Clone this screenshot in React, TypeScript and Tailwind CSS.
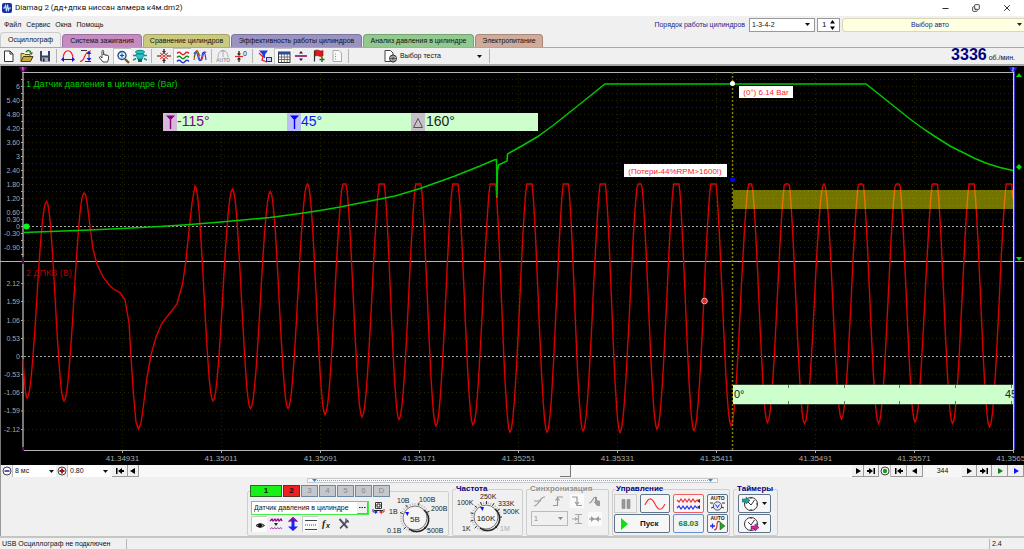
import React from "react";
import { Minus, X, Copy } from "lucide-react";

type Kids = { children?: React.ReactNode };

function Ico({ w = 14, h = 14, children }: Kids & { w?: number; h?: number }) {
  return (
    <svg width={w} height={h} viewBox={`0 0 ${w} ${h}`} fill="none" className="shrink-0" aria-hidden="true">
      {children}
    </svg>
  );
}

/* ---------- title and menu ---------- */

function TitleBar() {
  return (
    <header className="flex h-4 items-center bg-white pl-0.5">
      <Ico w={10} h={10}>
        <rect width="10" height="10" rx="2" fill="#1a2fa0" />
        <path d="M1 5h1.500l1-2.500 1 6 1-7 1 5.500.8-2H9" stroke="#bfe0ff" strokeWidth="1.1" />
      </Ico>
      <h1 className="ml-[3px] flex-1 font-[Roboto,'Noto_Sans',sans-serif] text-[8px] leading-4 text-[#111]">
        Diamag 2 (дд+дпкв ниссан алмера к4м.dm2)
      </h1>
      <div className="flex items-center gap-[22px] pr-3 text-[#222]">
        <button aria-label="Свернуть"><Minus size={9} strokeWidth={2.5} /></button>
        <button aria-label="Восстановить"><Copy size={8} strokeWidth={2.5} className="-scale-x-100 rotate-180" /></button>
        <button aria-label="Закрыть"><X size={10} strokeWidth={2.2} /></button>
      </div>
    </header>
  );
}

function Select({ label, value, options, className, arrowPad = "right-1" }: { label: string; value: string; options: string[]; className: string; arrowPad?: string }) {
  return (
    <span className={`relative flex items-center ${className}`}>
      <select aria-label={label} defaultValue={value} className="h-full w-full appearance-none bg-transparent pl-0.5 text-[7px] leading-[10px] outline-none">
        {options.map((o) => <option key={o}>{o}</option>)}
      </select>
      <span className={`pointer-events-none absolute ${arrowPad}`}><Arrow /></span>
    </span>
  );
}

function Arrow() {
  return <Ico w={5} h={3}><path d="M0 0h5L2.500 3z" fill="currentColor" /></Ico>;
}

function MenuBar() {
  return (
    <div className="flex h-[17px] items-center bg-[#f0f0f0]">
      <nav className="flex flex-1 gap-[5px] pl-1">
        {["Файл", "Сервис", "Окна", "Помощь"].map((m) => <button key={m}>{m}</button>)}
      </nav>
      <span className="mr-1 text-[#1c1c8c]">Порядок работы цилиндров</span>
      <Select label="Порядок работы цилиндров" value="1-3-4-2" options={["1-3-4-2", "1-2-4-3"]} className="mr-0.5 h-3.5 w-[66px] border border-[#999] bg-white" />
      <span className="relative mr-0.5 flex h-3.5 w-[23px] items-center border border-[#999] bg-white">
        <input aria-label="Номер цилиндра" defaultValue="1" className="w-full bg-transparent pl-1 text-[8px] outline-none" />
        <span className="pointer-events-none absolute right-1">
          <Ico w={5} h={10}><path d="M0 3.500h5L2.500 0zM0 6.500h5L2.500 10z" fill="#000" /></Ico>
        </span>
      </span>
      <button className="flex h-3.5 w-[182px] items-center rounded-l-sm border border-r-0 border-[#d8d8b8] bg-[#ffffe1] pr-0.5 text-[#1c1c8c]">
        <span className="flex-1">Выбор авто</span>
        <span className="text-[#222]"><Arrow /></span>
      </button>
    </div>
  );
}

function Tabs() {
  const tabs = [
    ["Осциллограф", "w-[61px] bg-[#f0f0f0] border-[#ccc] h-[15px]"],
    ["Система зажигания", "w-[80px] bg-[#c48cc2] border-[#a070a0] h-[13px]"],
    ["Сравнение цилиндров", "w-[87px] bg-[#c9c97f] border-[#a5a568] h-[13px]"],
    ["Эффективность работы цилиндров", "w-[131px] bg-[#9a93c2] border-[#7c76a0] h-[13px]"],
    ["Анализ давления в цилиндре", "w-[111px] bg-[#93c98f] border-[#76a472] h-[13px]"],
    ["Электропитание", "w-[68px] bg-[#d0aa9a] border-[#a88878] h-[13px]"],
  ];
  return (
    <div role="tablist" className="flex h-3.5 items-end gap-px bg-[#f0f0f0]">
      {tabs.map(([t, c], i) => (
        <button role="tab" aria-selected={i === 0} key={t} className={`shrink-0 rounded-t-sm border border-b-0 whitespace-nowrap ${c}`}>
          {t}
        </button>
      ))}
    </div>
  );
}

/* ---------- toolbar ---------- */

function Tool({ label, on, children }: Kids & { label: string; on?: boolean }) {
  return (
    <button
      aria-label={label}
      aria-pressed={on}
      className={`flex h-4 w-[18px] shrink-0 items-center justify-center ${on ? "border-t border-l border-[#c4c4c4] bg-[#fafafa]" : ""}`}
    >
      <Ico>{children}</Ico>
    </button>
  );
}

function Sep() {
  return <span className="mx-0.5 h-3.5 w-px shrink-0 bg-[#b4b4b4]" />;
}

function Toolbar() {
  return (
    <div role="toolbar" className="flex h-[19px] items-center border-t border-b-2 border-[#a8a8a8] bg-[#f0f0f0]">
      <Tool label="Новый"><path d="M2.500 2h5.500l3 3v7.500H2.500zM8 2v3h3" fill="#fff" stroke="#333" /></Tool>
      <Tool label="Открыть">
        <path d="M1 12.500V4.500h3l1 1h5v2" fill="#e8d070" stroke="#66581a" />
        <path d="M1 12.500l2.500-5H13l-2.500 5z" fill="#c9a93a" stroke="#4a3f10" />
        <path d="M6 3c2-2.500 4-1.500 5 .5" stroke="#137a13" strokeWidth="1.400" /><path d="M9 3.500h4L11.500 6z" fill="#137a13" />
      </Tool>
      <Tool label="Сохранить">
        <path d="M2 2h10v10.500H3l-1-1z" fill="#37445c" /><rect x="4" y="2" width="6" height="4.500" fill="#f4f6fa" /><rect x="4" y="8.500" width="6" height="4" fill="#aab4c4" /><rect x="5" y="9.500" width="1.500" height="3" fill="#222" />
      </Tool>
      <Sep />
      <Tool label="Масштаб по горизонтали">
        <path d="M2 10C2 -1 12 -1 12 10" stroke="#f02020" strokeWidth="1.200" /><path d="M2 10.500h10" stroke="#1818e0" /><path d="M0 10.500l3-2.500v5zM14 10.500l-3-2.500v5z" fill="#1818e0" />
      </Tool>
      <Tool label="Масштаб по вертикали">
        <path d="M1 12.500c6 0 3-10.500 11-10.500" stroke="#f02020" strokeWidth="1.200" /><path d="M2 1.500h6M6 12.500h6M10 3v8" stroke="#333" /><path d="M10 2L7.500 5h5zM10 12L7.500 9h5z" fill="#1818e0" />
      </Tool>
      <Tool label="Рука">
        <path d="M5 8V2.300c0-1.300 1.600-1.300 1.600 0V6c0-1 1.700-1 1.700 0v.5c0-1 1.600-1 1.600 0V7c0-1 1.600-.8 1.600.2V10l-1 3H6L2.500 8.800C2 7.600 3.500 7.200 4 8l1 1z" fill="#fff" stroke="#333" strokeWidth=".9" />
      </Tool>
      <Tool label="Лупа" on>
        <path d="M9 9l4 4" stroke="#7a5a20" strokeWidth="2.400" /><circle cx="6" cy="5.500" r="4" fill="#d8ecff" stroke="#22508c" strokeWidth="1.400" /><path d="M4 5.500h4M6 3.500v4" stroke="#22508c" strokeWidth="1.200" />
      </Tool>
      <Tool label="Датчик">
        <ellipse cx="7" cy="3" rx="4.500" ry="1.700" fill="#2ac4c4" stroke="#128888" /><path d="M3 5c0 2 1.500 3 1.500 5h5c0-2 1.500-3 1.500-5z" fill="#2ac4c4" stroke="#128888" /><path d="M0 6.500h3M11 6.500h3M0 11l3-1.500M14 11l-3-1.500" stroke="#158a8a" strokeWidth="1.400" /><rect x="5" y="10" width="4" height="3" fill="#136a6a" />
      </Tool>
      <Sep /><span className="w-px" />
      <Tool label="Сжать">
        <path d="M0 7h3l4-3 4 3h3" stroke="#159015" /><path d="M0 7h3l4 3 4-3h3M3 4l8 6M3 10l8-6" stroke="#e02828" strokeWidth=".9" /><path d="M7 0v2.500M7 11.500V14" stroke="#333" strokeWidth="1.400" /><path d="M5 2h4L7 4.500zM5 12h4L7 9.500z" fill="#333" />
      </Tool>
      <Tool label="Раздельно" on>
        <path d="M1 3.500q2-2.500 4 0t4 0 4 0" stroke="#e02828" strokeWidth="1.300" /><path d="M1 7.500q2-2.500 4 0t4 0 4 0" stroke="#159015" strokeWidth="1.300" /><path d="M1 11.500q2-2.500 4 0t4 0 4 0" stroke="#2038e0" strokeWidth="1.300" />
      </Tool>
      <Tool label="Совместно">
        <path d="M1 11C3-2 5 0 6 7s3 5 4 0 2-5 3-3" stroke="#e02828" strokeWidth="1.100" /><path d="M1 5c2-4 3-2 4 3s3 5 4-1 3-5 4 4" stroke="#2038e0" strokeWidth="1.100" /><path d="M1 8c2-8 4-6 6-1" stroke="#159015" />
      </Tool>
      <Sep />
      <Tool label="Автоизмерение">
        <path d="M2 8.500C2-1 12-1 12 8.500M7 1v7M5.500 3L7 1l1.500 2" stroke="#aaa" /><text x="7" y="13" textAnchor="middle" fontSize="5" fontWeight="700" fill="#999">AUTO</text>
      </Tool>
      <Tool label="Ноль">
        <path d="M1 7.500h8" stroke="#e02828" strokeWidth="1.200" /><path d="M5 2v3M5 10v3" stroke="#222" strokeWidth="1.300" /><path d="M3 4.500h4L5 7zM3 10.500h4L5 8z" fill="#222" /><text x="9" y="7" fontSize="7" fill="#222">0</text>
      </Tool>
      <Sep /><span className="w-px" />
      <Tool label="Фильтр">
        <path d="M1 1.500h9L7 5.500v4L4.500 7.500v-2z" fill="#2038e0" /><path d="M1 4l4 4-1 3 5 2" stroke="#e02828" strokeWidth="1.300" /><rect x="8.500" y="8.500" width="5" height="4" fill="#c8d4ff" stroke="#2a2a88" />
      </Tool>
      <Tool label="Таблица" on>
        <rect x="1.500" y="2" width="11.500" height="10.500" fill="#fff" stroke="#333" /><rect x="1.500" y="2" width="11.500" height="2.500" fill="#2c4c9c" /><path d="M4.500 4v8M7.300 4v8M10.200 4v8M2 7h11M2 9.500h11" stroke="#555" strokeWidth=".8" />
      </Tool>
      <Tool label="Разделитель"><path d="M1 7h12" stroke="#800060" strokeWidth="1.500" /><path d="M5 4.500h4L7 2zM5 9.500h4L7 12z" fill="#222" /></Tool>
      <Tool label="Флаг"><path d="M2.500 1.500v11" stroke="#333" strokeWidth="1.200" /><path d="M3 1.500q2-1 4 0t4 0V7Q9 8 7 7T3 7z" fill="#e01818" stroke="#801010" strokeWidth=".6" /><path d="M7.500 10.500h5M10 8v5" stroke="#118011" strokeWidth="1.500" /></Tool>
      <Tool label="Отчёт"><path d="M3 1.500h6l2.500 2.500v8.500H3z" fill="#fafafa" stroke="#aaa" /><path d="M5 5h1M5 7.500h1M5 10h1" stroke="#888" /></Tool>
      <Sep />
      <button className="flex h-4 w-[136px] shrink-0 items-center pr-[5px] pl-[33px]">
        <Ico w={14} h={14}>
          <path d="M1 1.500h5.500L9 4v8.500H1z" fill="#fff" stroke="#444" /><circle cx="9" cy="9.500" r="3.500" fill="#ddd" stroke="#333" /><path d="M5 9.500h8M9 5.500v8M6.500 7l5 5M11.500 7l-5 5" stroke="#444" strokeWidth=".8" />
        </Ico>
        <span className="ml-0.5 flex-1 text-left">Выбор теста</span>
        <Arrow />
      </button>
      <Sep />
      <p className="ml-auto flex items-baseline gap-0.5 pr-[9px] leading-4">
        <strong className="text-base leading-4 text-[#00007c]">3336</strong>
        <span>об./мин.</span>
      </p>
    </div>
  );
}

/* ---------- chart ---------- */

const EXTREMES: [number, number][] = [
  [195, 186], [213, 401], [232.5, 189], [250.5, 408.5], [270.3, 191.5], [288, 408.5], [307.500, 183.500], [325, 414.5],
  [344.5, 178], [362, 417], [382, 170], [399, 419.5], [418.5, 168], [436, 426], [455.5, 168], [473, 425], [493, 168],
  [510, 432], [529.5, 168], [547, 432], [566, 168], [583, 431], [603, 168], [620, 432.5], [639.7, 175], [657, 429],
  [676.5, 168], [694, 430.5], [713.5, 170], [731, 425.5], [750.3, 178], [767.5, 422.5], [787, 173], [804.5, 423.5],
  [824, 183.5], [841.5, 419], [861, 173], [878.5, 423.5], [897.7, 174], [915, 422], [935, 172], [952.500, 423.5],
  [971.7, 170], [989.5, 427], [1009, 170], [1027, 427],
];
const START: [number, number][] = [[19, 320], [27, 398], [46.5, 201.5], [64, 401], [84, 193]];
const GAP: [number, number][] = [
  [84, 193], [85.5, 194.5], [87, 202], [88.5, 214], [90, 227], [93, 249], [97, 264], [103, 277], [110, 286], [115, 290], [120, 292.5], [125, 300],
  [129, 323], [131, 357], [133.3, 393], [136, 422], [138.5, 429], [141, 423], [143.5, 405], [147, 377], [151, 355],
  [156, 337], [162, 323], [170, 313], [177, 304], [180, 293], [182.7, 283], [186, 260], [189, 230], [192, 203],
];

function swing(pts: [number, number][]) {
  const out: string[] = [];
  for (let i = 0; i < pts.length - 1; i++) {
    const [x0, y0] = pts[i];
    const [x1, y1] = pts[i + 1];
    for (let k = 0; k < 14; k++) {
      const t = k / 14;
      const x = x0 + (x1 - x0) * t;
      const y = Math.max(184, y0 + ((y1 - y0) * (1 - Math.cos(Math.PI * t))) / 2);
      if (x >= 23 && x <= 1013) out.push(`${x.toFixed(1)},${y.toFixed(1)}`);
    }
  }
  return out;
}

const RED = [...swing(START), ...GAP.map((p) => p.join(",")), ...swing(EXTREMES)].join(" ");
const GREEN =
  "23,232.5 50,231.5 90,230 122,228.5 160,226.5 190,224.500 221,222 270,217.500 300,213.5 320,210.500 340,207 360,203 380,199 395,196 420,188.5 455,176 480,166 494,160 496.5,159.500 497,198 497.5,170 498.5,165 507,161 507.500,154 520,147 537,137 553,125.5 575,108 590,96 605,84 866,84 880,95 893,105.500 910,119 925,130 935,136.5 950,146 963,152.500 975,158.500 987,163.500 1000,167.500 1013,170.5";

const X_TICKS: [number, string][] = [
  [122.5, "41.34931"], [221, "41.35011"], [320.5, "41.35091"], [419, "41.35171"], [518.5, "41.35251"],
  [617.5, "41.35331"], [716.5, "41.35411"], [815.5, "41.35491"], [914, "41.35571"], [1013, "41.35651"],
];
const Y_TOP: [number, string][] = [
  [86.5, "6"], [100.5, "5.40"], [114.5, "4.80"], [128.5, "4.20"], [142.5, "3.60"], [156.5, "3"], [170.5, "2.40"],
  [184.5, "1.80"], [198.5, "1.20"], [212.5, "0.60"], [219.5, "0.30"], [226.5, "0"], [233.5, "-0.30"], [247.5, "-0.90"],
];
const Y_BOTTOM: [number, string][] = [
  [283, "2.12"], [301, "1.59"], [320, "1.06"], [338, "0.53"], [356, "0"], [374, "-0.53"], [392, "-1.06"], [410.5, "-1.59"], [429, "-2.12"],
];
const MINOR = Array.from({ length: 26 }, (_, i) => 79.5 + i * 7);

function Chart() {
  return (
    <svg viewBox="0 66 1024 399" className="block w-full bg-black" role="img" aria-label="Осциллограмма">
      <clipPath id="plot"><rect x="22" y="66" width="992" height="399" /></clipPath>
      <g stroke="#262600" strokeDasharray="1 3">
        {MINOR.map((y) => <path key={y} d={`M24 ${y}H1013`} />)}
        {Y_BOTTOM.map(([y]) => <path key={y} d={`M24 ${y + 0.5}H1013`} />)}
        {X_TICKS.slice(0, 9).map(([x]) => <path key={x} d={`M${Math.floor(x) + 0.5} 74V450`} />)}
      </g>
      <g stroke="#a8a8a8" strokeDasharray="2 2"><path d="M24 226.500H1013M24 356.500H1013" /></g>
      <path d="M0.500 66V465" stroke="#777" />
      <path d="M23 72V450" stroke="#777" strokeWidth="2" />
      <g stroke="#aaa">
        {MINOR.map((y) => <path key={y} d={`M21 ${y}h2`} />)}
        {Y_BOTTOM.map(([y]) => <path key={y} d={`M21 ${y + 0.5}h2`} />)}
        {X_TICKS.map(([x]) => <path key={x} d={`M${Math.floor(x) + 0.5} 451v2`} />)}
      </g>
      <path d="M22 72.500H1014M0 261.500H1024M22 450.500H1014" stroke="#b4b4b4" />
      <path d="M23 257v7M23 447v4" stroke="#501050" strokeWidth="2" />
      <g fill="#a8a8a8" fontSize="7" textAnchor="end">
        {[...Y_TOP, ...Y_BOTTOM].map(([y, t]) => <text key={y} x="20" y={y + 2.5}>{t}</text>)}
      </g>
      <g fill="#a8a8a8" fontSize="8" textAnchor="middle">
        {X_TICKS.map(([x, t]) => <text key={x} x={x} y="461">{t}</text>)}
      </g>
      <g clipPath="url(#plot)">
        <polyline points={RED} fill="none" stroke="#d80000" strokeWidth="1.400" />
        <polyline points={GREEN} fill="none" stroke="#00c800" strokeWidth="1.500" />
      </g>
      <rect x="733" y="190" width="281" height="19" fill="#ffff00" fillOpacity=".45" />
      <path d="M732.500 72V450" stroke="#808000" strokeDasharray="2 2" strokeWidth="1.500" />
      <path d="M1014 68V450" stroke="#3a3ad0" strokeWidth="2" /><path d="M1013.500 72V450" stroke="#c8c8f0" />
      <g fontSize="9">
        <text x="26" y="87" fill="#00c800">1 Датчик давления в цилиндре (Bar)</text>
        <text x="26" y="276" fill="#b00000">2 ДПКВ (B)</text>
      </g>
      <path d="M18.500 67h9l-3 4v1h-3v-1z" fill="#800080" /><path d="M22 68l1 -0.500v3" stroke="#e8c8e8" strokeWidth=".8" fill="none" />
      <path d="M1008.500 67h9l-3 5h-3z" fill="#1818e8" /><path d="M1012 68h2l-2 3h2" stroke="#d8d8ff" strokeWidth=".7" fill="none" />
      <path d="M1016 77l3-4 3 4zM1016 257h6l-3 4z" fill="#00e000" />
      <path d="M1019 164l3 3-3 3-3-3z" fill="#00e000" />
      <circle cx="26.500" cy="226.500" r="3" fill="#00ff20" />
      <circle cx="732.500" cy="83.500" r="2.500" fill="#fff" />
      <circle cx="732.500" cy="179.500" r="2.500" fill="#0000f0" />
      <circle cx="704.500" cy="301" r="2.800" fill="#f02020" stroke="#eec8c8" strokeWidth=".9" />

      <rect x="163" y="113" width="375" height="18" fill="#ccffcc" />
      <rect x="163" y="113" width="14" height="18" fill="#d8b8d8" />
      <rect x="287" y="113" width="14" height="18" fill="#bcbcf8" />
      <rect x="411" y="113" width="14" height="18" fill="#c8c0c8" />
      <path d="M166 115.500h9l-3.800 4V129h-1.400v-9.500z" fill="#800080" />
      <path d="M290 115.500h9l-3.800 4V129h-1.400v-9.500z" fill="#0000ff" />
      <path d="M413.500 127.500h9L418 118.500z" fill="none" stroke="#555" />
      <g fontSize="14">
        <text x="177" y="126" fill="#800080">-115°</text>
        <text x="301" y="126" fill="#1414ff">45°</text>
        <text x="426" y="126" fill="#222">160°</text>
      </g>
      <rect x="739" y="86" width="54" height="12" fill="#fff" />
      <rect x="624" y="164" width="103" height="13" fill="#fff" />
      <g fontSize="8" fill="#ff2020" textAnchor="middle">
        <text x="766" y="95">(0°) 6.14 Bar</text>
        <text x="675" y="174">(Потери-44%RPM&gt;1600!)</text>
      </g>
      <rect x="733" y="385" width="280" height="19" fill="#ccffcc" />
      <path d="M733 384.500h280M733 404.500h280" stroke="#446644" strokeWidth=".6" />
      <path d="M788.500 385v3M844.500 385v3M899.500 385v3M955.500 385v3M1011.500 385v3M788.500 401v3M844.500 401v3M899.500 401v3M955.500 401v3M1011.500 401v3" stroke="#667766" />
      <g fontSize="11" fill="#222" clipPath="url(#plot)">
        <text x="734" y="398">0°</text>
        <text x="1005" y="398">45°</text>
      </g>
    </svg>
  );
}

/* ---------- scroll strip ---------- */

const SHAPES: Record<string, string> = {
  toStart: "M1 1h1.500v6H1zM3 4l4-3v2h2v2H7v2z",
  toEnd: "M9 1H7.500v6H9zM7 4L3 1v2H1v2h2v2z",
  left: "M2 4l5-3v6z",
  right: "M8 4L3 1v6z",
};

function Nav({ shape, label, w = "w-[15px]", color = "text-black" }: { shape: string; label: string; w?: string; color?: string }) {
  return (
    <button aria-label={label} className={`flex h-3 shrink-0 items-center justify-center border-r border-b border-[#9a9a9a] bg-[#f0f0f0] ${w} ${color}`}>
      <Ico w={10} h={8}><path d={SHAPES[shape]} fill="currentColor" /></Ico>
    </button>
  );
}

function Round({ label, children }: Kids & { label: string }) {
  return (
    <button aria-label={label} className="flex h-3 w-3 shrink-0 items-center justify-center border-r border-[#bbb] bg-[#eee]">
      <Ico w={10} h={10}><circle cx="5" cy="5" r="4" stroke="#444" fill="#fff" />{children}</Ico>
    </button>
  );
}

function ScrollStrip() {
  return (
    <div className="flex h-3 items-center border-l border-[#999] bg-[#f6f6f6]">
      <Round label="Уменьшить"><path d="M2.500 5h5" stroke="#2020b0" strokeWidth="1.500" /></Round>
      <Select label="Длительность" value="8 мс" options={["8 мс", "16 мс"]} className="h-3 w-[43px] bg-white" arrowPad="right-0.5" />
      <Round label="Увеличить"><path d="M2.500 5h5M5 2.500v5" stroke="#a01010" strokeWidth="1.800" /></Round>
      <Select label="Масштаб" value="0.80" options={["0.80", "1.00"]} className="h-3 w-[42px] bg-white" arrowPad="right-0.5" />
      <span className="w-0.5" />
      <Nav shape="toStart" label="В начало" w="w-4" />
      <Nav shape="left" label="Назад" w="w-[11px]" />
      <div className="flex h-3 flex-1 bg-[#f8f8f8]">
        <span className="grow-3" />
        <span className="h-3 w-[11px] border-r border-b border-[#777] bg-[#f0f0f0]" />
        <span className="grow-2" />
      </div>
      <Nav shape="right" label="Вперёд" w="w-3" />
      <Nav shape="toEnd" label="В конец" />
      <Round label="Запись"><circle cx="5" cy="5" r="2.200" fill="#18a018" /></Round>
      <Nav shape="toStart" label="Первый кадр" w="w-4" />
      <Nav shape="left" label="Предыдущий кадр" w="w-4" />
      <output className="w-[39px] text-center">344</output>
      <Nav shape="right" label="Следующий кадр" />
      <Nav shape="toEnd" label="Последний кадр" />
      <Nav shape="right" label="Воспроизвести" color="text-[#108010]" w="w-4" />
      <Nav shape="right" label="Воспроизвести всё" color="text-[#1010ff]" w="w-4" />
    </div>
  );
}

/* ---------- control panel ---------- */

type Mark = [number, number, string, string?];

function Knob({ w, cx, cy, value, marks, angles, pointer }: { w: number; cx: number; cy: number; value: string; marks: Mark[]; angles: number[]; pointer: [number, number] }) {
  const at = (a: number, r: number) => `${(cx + r * Math.cos((a * Math.PI) / 180)).toFixed(1)} ${(cy - r * Math.sin((a * Math.PI) / 180)).toFixed(1)}`;
  return (
    <svg width={w} height="38" viewBox={`0 0 ${w} 38`} className="shrink-0" role="slider" aria-valuenow={0} aria-valuetext={value} tabIndex={0}>
      <circle cx={cx} cy={cy} r="14" fill="none" stroke="#b8b8b8" strokeWidth="2" strokeDasharray="1 1.500" />
      {angles.map((a) => <path key={a} d={`M${at(a, 13)}L${at(a, 16)}`} stroke="#333" />)}
      <circle cx={cx} cy={cy} r="12" fill="#f4f4f4" stroke="#777" />
      <path d={`M${cx + 9} ${cy - 8}a12 12 0 0 1 -15 19`} fill="none" stroke="#222" strokeWidth="1.500" />
      <path d={`M${pointer[0] - 2} ${pointer[1] - 2}h4l-1.500 4z`} fill="#1010ff" />
      <text x={cx} y={cy + 4} fontSize="8" textAnchor="middle" fill="#222">{value}</text>
      <g fontSize="7" fill="#222">
        {marks.map(([x, y, t, c]) => <text key={t} x={x} y={y} fill={c}>{t}</text>)}
      </g>
    </svg>
  );
}

function Group({ title, className, muted, children }: Kids & { title: string; className: string; muted?: boolean }) {
  return (
    <fieldset className={`h-[52px] shrink-0 rounded-xs border border-[#cfcfcf] ${className}`}>
      <legend className={`ml-[3px] h-2.5 text-[8px] leading-[10px] font-bold ${muted ? "text-[#909090]" : "text-[#00007c]"}`}>{title}</legend>
      {children}
    </fieldset>
  );
}

function Small({ label, on, children }: Kids & { label: string; on?: boolean }) {
  return (
    <button aria-label={label} className={`flex h-4 w-4 items-center justify-center ${on ? "border-t border-l border-[#c8c8c8] bg-[#fafafa]" : ""}`}>
      <Ico>{children}</Ico>
    </button>
  );
}

const RAISED = "flex items-center justify-center rounded-xs border border-[#5f7488] bg-[#f6f6f6]";

function Panel() {
  return (
    <section className="flex h-[53px] items-end justify-center gap-[3px] border-l border-[#999] bg-[#f0f0f0] text-[8px]">
      <fieldset className="h-[51px] w-[202px] shrink-0 rounded-xs border border-[#cfcfcf]">
        <legend className="ml-0.5">
          <div className="flex h-3 gap-px">
            <button className="w-8 border border-[#2a6a2a] bg-[#18f018] leading-[10px] font-bold">1</button>
            <button className="w-[17px] border border-[#603030] bg-[#f02020] leading-[10px] font-bold">2</button>
            {["3", "4", "5", "6", "D"].map((c) => (
              <button key={c} className="w-[17px] border border-[#6a8aa8] bg-[#c4c8cc] leading-[10px] text-[#8a8a8a]">{c}</button>
            ))}
          </div>
        </legend>
        <div className="flex pl-[3px]">
          <div className="mt-1 w-[134px]">
            <div className="flex items-center gap-[3px]">
              <span className="flex h-3.5 w-[119px] items-center border border-[#44ee44] bg-white">
                <input aria-label="Датчик" defaultValue="Датчик давления в цилиндре" className="min-w-0 flex-1 bg-transparent pl-0.5 text-[7px] outline-none" />
                <button aria-label="Выбрать датчик" className="flex h-full w-[11px] items-center justify-center border-r border-b border-[#999] bg-[#f0f0f0]">
                  <Ico w={7} h={2}><path d="M0 .5h1.500M2.500.5H4M5 .5h1.500" stroke="#222" /></Ico>
                </button>
              </span>
              <Ico w={13} h={14}>
                <path d="M3.500 1.500h6v6h-6z" fill="#fff" stroke="#333" /><path d="M5 3h3v3H5zM2 9.500h9" stroke="#222" />
                <path d="M1 8v3h3" stroke="#2020e0" /><path d="M3 9l3 2-3 2z" fill="#2020e0" /><path d="M12 8v3H9" stroke="#e02020" /><path d="M10 9l-3 2 3 2z" fill="#e02020" />
              </Ico>
            </div>
            <div className="mt-px flex gap-px">
              <Small label="Показать" on>
                <path d="M3 7.500Q7 4 11.500 7.500 7 11 3 7.500z" fill="#999" stroke="#222" /><circle cx="7" cy="7.500" r="2" fill="#111" />
              </Small>
              <Small label="Сигнал">
                <path d="M1 4l2-2 1 2 2-2 1 2 2-2 1 2 2-2 1 2" stroke="#900090" strokeWidth="1.300" /><path d="M1 12l2-1.500 1 1.500 2-1.500 1 1.500 2-1.500 1 1.500 2-1.500 1 1.500" stroke="#b040b0" /><path d="M5 6h4L7 9z" fill="#222" />
              </Small>
              <Small label="Смещение">
                <path d="M7 0l5 4.500H8.500v5H12L7 14 2 9.500h3.500v-5H2z" fill="#2020f0" /><path d="M2 4.500L7 0v2L4 4.500zM12 4.500L7 0v2l3 2.500z" fill="#a01080" />
              </Small>
              <Small label="Линии" on><path d="M1 2.500h12M1 11.500h12" stroke="#444" /><path d="M1 7h12" stroke="#444" strokeDasharray="1 1" /></Small>
              <Small label="Функция"><text x="2" y="10" fontSize="10" fontStyle="italic" fontWeight="700" fontFamily="Liberation Serif, serif" fill="#222">f</text><text x="6" y="11" fontSize="7" fontStyle="italic" fontWeight="700" fill="#222">x</text></Small>
              <Small label="Настройки"><path d="M2.500 2l8 9" stroke="#555" strokeWidth="2" /><path d="M11 3L3 11.500" stroke="#446" strokeWidth="1.600" /><path d="M9 1.500v3l3 .5" stroke="#557" strokeWidth="1.400" /></Small>
            </div>
          </div>
          <Knob
            w={63} cx={30} cy={21} value="5В" pointer={[22, 17]} angles={[225, 160, 125, 75, 25, -45]}
            marks={[[2, 36, "0.1В"], [4, 17, "1В"], [12, 6, "10В"], [34, 5, "100В"], [46, 14, "200В"], [42, 36, "500В"]]}
          />
        </div>
      </fieldset>

      <Group title="Частота" className="w-[71px]">
        <Knob
          w={69} cx={33} cy={23} value="160K" pointer={[29, 15]} angles={[225, 195, 165, 135, 110, 88, 60, 30, 0, -45]}
          marks={[[9, 37, "1K"], [4, 11, "100K"], [27, 5, "250K"], [45, 12, "333K"], [50, 20, "500K"], [47, 37, "1M", "#aaa"]]}
        />
      </Group>

      <Group title="Синхронизация" muted className="w-[83px]">
        <div className="grid grid-cols-4 place-items-center gap-y-[3px] px-1 text-[#aaa]">
          <button aria-label="Источник"><Ico><path d="M1 12c5 0 5-9 11-9M1 7h7" stroke="#999" strokeWidth="1.200" /></Ico></button>
          <button aria-label="Фронт"><Ico><path d="M2 11.500h4.500V3H12M4.500 6.500l2-2.500 2 2.500" stroke="#999" strokeWidth="1.200" /></Ico></button>
          <button aria-label="Спад" className="bg-[#fafafa]"><Ico><path d="M2 3h5v8.500h5M5 8l2 2.500 2-2.500" stroke="#999" strokeWidth="1.200" /></Ico></button>
          <button aria-label="Рука"><Ico><path d="M1 9c4 0 3-6 7-6" stroke="#999" strokeWidth="1.200" /><path d="M7 3v5L5 7l4 5h3V7L9 6V3z" fill="#999" /></Ico></button>
          <Select label="Канал синхронизации" value="1" options={["1", "2"]} className="col-span-2 h-[15px] w-full border border-[#bbb] text-[#888]" />
          <button aria-label="Уровень"><Ico><path d="M5 2.500h7M2 7h6M5 11.500h7M8.500 3v8" stroke="#aaa" strokeWidth="1.200" /><path d="M5 5l3 2-3 2z" fill="#aaa" /></Ico></button>
          <button aria-label="Сжать" className="bg-[#fafafa]"><Ico><path d="M1 7h12" stroke="#999" strokeWidth="1.200" /><path d="M3 4l3.500 3L3 10zM11 4L7.500 7l3.500 3z" fill="#999" /></Ico></button>
        </div>
      </Group>

      <Group title="Управление" className="w-[117px]">
        <div className="grid grid-cols-[23px_30px_31px_21px] grid-rows-[19px_19px] gap-x-[3px] gap-y-px px-px">
          <button aria-label="Пауза" className="flex items-center justify-center border border-[#ccc]"><Ico><path d="M3 2.500h3v9H3zM8 2.500h3v9H8z" fill="#999" stroke="#888" strokeWidth=".6" /></Ico></button>
          <button aria-label="Синус" className={RAISED}><Ico w={22} h={14}><path d="M1 8C5-1 8 1 11 7s6 8 10 0" stroke="#f03030" strokeWidth="1.100" /></Ico></button>
          <button aria-label="Сигналы" className="flex items-center justify-center rounded-xs border border-[#f06060] bg-[#fff4f4]">
            <Ico w={25} h={14}><path d="M1 3l2 2 2-3 2 3 2-3 2 3 2-3 2 3 2-3 2 3 2-2h3" stroke="#f03030" strokeWidth="1.200" /><path d="M1 11l2-2 2 3 2-3 2 3 2-3 2 3 2-3 2 3 2-3 2 2h3" stroke="#2838e8" strokeWidth="1.200" /><path d="M24 2v4l-3-2zM24 8v4l-3-2z" fill="#333" /></Ico>
          </button>
          <button aria-label="Автонастройка" className={RAISED}>
            <Ico w={17} h={17}><text x="8.500" y="5" fontSize="5" fontWeight="700" textAnchor="middle" fill="#222">AUTO</text><circle cx="8.500" cy="11" r="4.200" fill="#dfe6ff" stroke="#555" /><path d="M1 8h3M13 8h3M2 13l3-1M15 13l-3-1" stroke="#333" /><path d="M6.500 9.500l2 3 2-3" stroke="#2030e0" /></Ico>
          </button>
          <button className={`${RAISED} col-span-2 justify-start gap-3 pl-1.5`}>
            <Ico w={7} h={12}><path d="M0 0l7 6-7 6z" fill="#10e010" /></Ico>
            <b>Пуск</b>
          </button>
          <output className="flex items-center justify-center rounded-xs border border-[#6890c8] bg-[#eef4fa] font-bold text-[#108010]">68.03</output>
          <button aria-label="Автозапуск" className={RAISED}>
            <Ico w={17} h={17}><text x="8.500" y="5" fontSize="5" fontWeight="700" textAnchor="middle" fill="#222">AUTO</text><path d="M1 11h5M3.500 8.500v5" stroke="#2030e0" strokeWidth="1.300" /><path d="M5 15q3 0 3-5t3-3" stroke="#e02020" strokeWidth="1.200" /><path d="M11 7l5 4-5 4z" fill="#18b018" stroke="#333" strokeWidth=".5" /></Ico>
          </button>
        </div>
      </Group>

      <Group title="Таймеры" className="w-[45px]">
        <div className="grid grid-rows-[19px_19px] gap-y-px pr-1.5 pl-1">
          {["#20a0a0", "#e020a0"].map((c, i) => (
            <button key={c} aria-label={`Таймер ${i + 1}`} className={`${RAISED} gap-[3px]`}>
              <Ico w={17} h={16}>
                <circle cx="9" cy="8" r="6.500" fill="#fff" stroke="#333" />
                <path d="M9 9l3.500-5M9 9L6 6M9 2v1M15 8h-1M9 14v-1" stroke="#333" />
                {i === 0 ? <path d="M0 3h4V1l4 3.500L4 8V6H0z" fill={c} stroke="#0a5050" strokeWidth=".5" /> : <path d="M9 10h4V8l4 3.500L13 15v-2H9z" fill={c} stroke="#500a50" strokeWidth=".5" />}
              </Ico>
              <Arrow />
            </button>
          ))}
        </div>
      </Group>
    </section>
  );
}

function Splitter() {
  return (
    <div className="flex h-[6px] items-center justify-center border-l border-[#999] bg-[#f0f0f0]">
      <div className="flex h-[5px] w-[411px] items-center justify-between border border-[#c8c8c8] bg-[#f4faff] px-1 text-[#2090e0]">
        <Arrow />
        <span className="flex-1 border-t border-dotted border-[#60b0e8]" />
        <Arrow />
      </div>
    </div>
  );
}

export default function App() {
  return (
    <main className="flex min-h-screen flex-col bg-[#f0f0f0] font-['Liberation_Sans',Arial,sans-serif] text-[7px] leading-[10px] text-[#111]">
      <TitleBar />
      <MenuBar />
      <Tabs />
      <Toolbar />
      <Chart />
      <ScrollStrip />
      <Splitter />
      <Panel />
      <footer className="flex h-[13px] items-center border-t-2 border-[#c4c6c4] bg-[#f0f0f0]">
        <span className="w-[127px] border-r border-[#b8b8b8] pl-0.5 whitespace-nowrap">USB Осциллограф не подключен</span>
        <span className="flex-1" />
        <span className="w-[35px] border-l border-[#b8b8b8] pl-0.5">2.4</span>
      </footer>
    </main>
  );
}
